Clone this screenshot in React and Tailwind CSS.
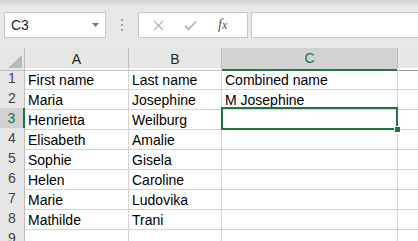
import React from 'react'

const rows = [
  ['First name', 'Last name', 'Combined name'],
  ['Maria', 'Josephine', 'M Josephine'],
  ['Henrietta', 'Weilburg', ''],
  ['Elisabeth', 'Amalie', ''],
  ['Sophie', 'Gisela', ''],
  ['Helen', 'Caroline', ''],
  ['Marie', 'Ludovika', ''],
  ['Mathilde', 'Trani', ''],
  ['', '', ''],
];

const cols = ['A', 'B', 'C'];
const grid = 'grid grid-cols-[25px_104px_93px_176px_1fr]';

const FormulaBar = () => (
  <div className="h-[48px] bg-[#e8e8e8] relative">
    <div className="h-[5px] bg-gradient-to-b from-[#d2d2d2] to-[#e2e2e2]" />
    <div className="flex items-center pt-[7px] pl-[4px] gap-0">
      <div className="w-[102px] h-[26px] bg-white border border-[#c8c8c8] flex items-center justify-between pl-[6px] pr-[6px]">
        <span className="text-[14px] text-[#262626]">C3</span>
        <svg width="7" height="4" viewBox="0 0 7 4"><polygon points="0,0 7,0 3.5,4" fill="#7a7a7a" /></svg>
      </div>
      <div className="w-[32px] flex flex-col items-center gap-[3px]">
        <span className="w-[2px] h-[2px] bg-[#a0a0a0]" />
        <span className="w-[2px] h-[2px] bg-[#a0a0a0]" />
        <span className="w-[2px] h-[2px] bg-[#a0a0a0]" />
      </div>
      <div className="w-[110px] h-[26px] bg-white border border-[#c8c8c8] flex items-center">
        <svg className="ml-[14px]" width="11" height="11" viewBox="0 0 11 11">
          <path d="M1 1 L10 10 M10 1 L1 10" stroke="#b4b4b4" strokeWidth="1.3" fill="none" />
        </svg>
        <svg className="ml-[20px]" width="13" height="11" viewBox="0 0 13 11">
          <path d="M1 6 L4.5 9.5 L12 1.5" stroke="#b4b4b4" strokeWidth="1.8" fill="none" />
        </svg>
        <span className="ml-[21px] text-[14px] italic text-[#555] font-['Liberation_Serif',serif] leading-none">
          f<span className="text-[12px]">x</span>
        </span>
      </div>
      <div className="flex-1 ml-[3px] h-[26px] bg-white border border-[#c8c8c8] border-r-0" />
    </div>
  </div>
);

const HeaderRow = () => (
  <div className={`${grid} h-[20px] bg-[#e6e6e6]`}>
    <div className="relative border-r border-b border-[#bdbdbd]">
      <svg className="absolute right-[2px] bottom-[2px]" width="14" height="13" viewBox="0 0 14 13">
        <polygon points="14,0 14,13 0,13" fill="#b9b9b9" />
      </svg>
    </div>
    {cols.map(c =>
      c === 'C' ? (
        <div key={c} className="bg-[#d2d2d2] border-r border-[#bdbdbd] border-b-2 border-b-[#217346] flex items-center justify-center text-[14px] text-[#217346]">
          {c}
        </div>
      ) : (
        <div key={c} className="border-r border-b border-[#bdbdbd] flex items-center justify-center text-[14px] text-[#262626]">
          {c}
        </div>
      )
    )}
    <div className="border-b border-[#9b9b9b]" />
  </div>
);

const Row = ({ n, cells }) => {
  const active = n === 3;
  return (
    <div className={`${grid} h-[20px]`}>
      <div
        className={`flex items-center justify-center text-[14px] border-b border-[#d4d4d4] ${
          active
            ? 'bg-[#d2d2d2] text-[#217346] border-r-2 border-r-[#217346]'
            : 'bg-[#e6e6e6] text-[#444] border-r border-r-[#bdbdbd]'
        }`}
      >
        {n}
      </div>
      {cells.map((t, i) => (
        <div key={i} className="relative border-r border-b border-[#d4d4d4] pl-[3px] flex items-end text-[14px] leading-[18px] text-black whitespace-nowrap">
          {t}
          {active && i === 2 && (
            <div className="absolute z-10 -left-[1px] -top-[1px] -right-[1px] -bottom-[1px] border-2 border-[#217346]">
              <div className="absolute -right-[5px] -bottom-[5px] w-[7px] h-[7px] bg-[#217346] border border-white" />
            </div>
          )}
        </div>
      ))}
      <div className="border-b border-[#d4d4d4]" />
    </div>
  );
};

export default function App() {
  return (
    <div className="w-[418px] h-[241px] overflow-hidden bg-white font-['Liberation_Sans',Arial,sans-serif]">
      <FormulaBar />
      <HeaderRow />
      {rows.map((cells, i) => (
        <Row key={i} n={i + 1} cells={cells} />
      ))}
    </div>
  );
}
